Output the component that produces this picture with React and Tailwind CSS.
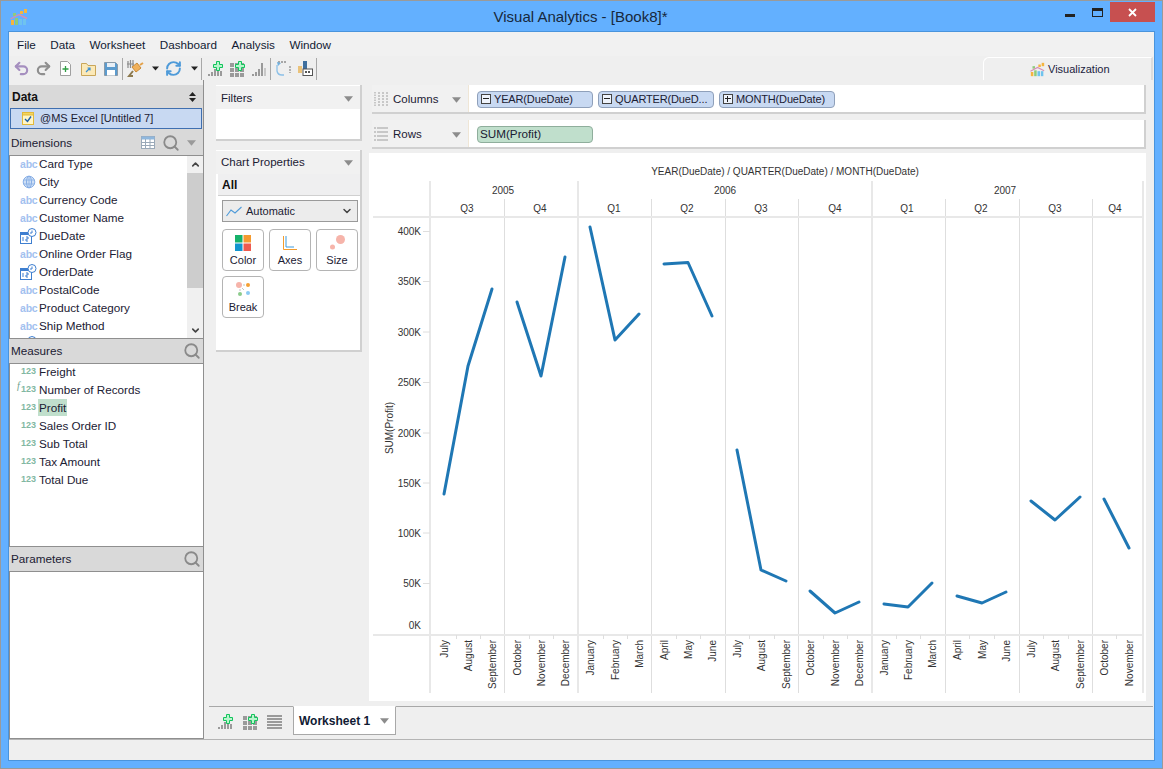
import { Search, Undo2, Redo2, ChevronDown, ChevronUp, RefreshCw } from 'lucide-react';

const dimensions = [
  ['abc', 'Card Type'],
  ['geo', 'City'],
  ['abc', 'Currency Code'],
  ['abc', 'Customer Name'],
  ['date', 'DueDate'],
  ['abc', 'Online Order Flag'],
  ['date', 'OrderDate'],
  ['abc', 'PostalCode'],
  ['abc', 'Product Category'],
  ['abc', 'Ship Method'],
  ['date', ''],
];

const measures = ['Freight', 'Number of Records', 'Profit', 'Sales Order ID', 'Sub Total', 'Tax Amount', 'Total Due'];

const segments = [
  [[444, 494, 'July'], [468, 366, 'August'], [492, 289, 'September']],
  [[517, 302, 'October'], [541, 376, 'November'], [565, 257, 'December']],
  [[590, 227, 'January'], [615, 340, 'February'], [639, 314, 'March']],
  [[664, 264, 'April'], [688, 262.5, 'May'], [712, 316, 'June']],
  [[737, 450, 'July'], [761, 570, 'August'], [786, 581, 'September']],
  [[810, 591, 'October'], [835, 613, 'November'], [859, 602, 'December']],
  [[884, 604, 'January'], [908, 607, 'February'], [932, 583, 'March']],
  [[957, 596, 'April'], [982, 603, 'May'], [1006, 592, 'June']],
  [[1031, 501, 'July'], [1055, 520, 'August'], [1080, 497, 'September']],
  [[1104, 499, 'October'], [1129, 548, 'November']],
];

const yTicks = [
  ['400K', 231.5], ['350K', 281.5], ['300K', 332], ['250K', 382.5], ['200K', 433],
  ['150K', 483], ['100K', 533], ['50K', 583.5],
];

const quarters = [['Q3', 467], ['Q4', 540], ['Q1', 614], ['Q2', 687], ['Q3', 761], ['Q4', 835], ['Q1', 907], ['Q2', 981], ['Q3', 1055], ['Q4', 1115]];
const monthTicks = [456, 480, 529, 553, 603, 627, 676, 700, 749, 774, 823, 847, 896, 920, 969, 994, 1043, 1068, 1116];

function Caret({ className = 'text-[#8c8c8c]', size = 9 }) {
  return (
    <svg width={size} height={Math.ceil(size * 0.6)} viewBox="0 0 10 6" className={className}>
      <polygon points="0,0 10,0 5,6" fill="currentColor" />
    </svg>
  );
}

function AppLogo({ size = 18 }) {
  return (
    <svg width={size} height={size} viewBox="0 0 18 18">
      <rect x="1" y="12" width="3" height="5" fill="#f5b53f" />
      <rect x="5" y="10" width="3" height="7" fill="#8ecb7c" />
      <rect x="9" y="11" width="3" height="6" fill="#6fc3ee" />
      <rect x="13" y="11" width="3" height="6" fill="#6fc3ee" />
      <rect x="3" y="5" width="3" height="3" fill="#8ecb7c" />
      <rect x="10" y="3" width="3" height="3" fill="#f5b53f" />
      <rect x="14" y="1" width="3" height="4" fill="#f5b53f" />
      <polyline points="0.5,11 9,6.5 17,10.5" fill="none" stroke="#d58fb4" strokeWidth="1.4" />
    </svg>
  );
}

function PlusMark() {
  return <path d="M9.500 .5h3v3h3v3h-3v3h-3v-3h-3v-3h3z" fill="#b8f5cd" stroke="#12c45c" strokeWidth="1" />;
}

function BarsPlus({ plus = true, color = '#9a9a9a' }) {
  return (
    <svg width="16" height="16" viewBox="0 0 16 16">
      <rect x="1" y="13" width="2" height="2" fill={color} />
      <rect x="4" y="11" width="2" height="4" fill={color} />
      <rect x="7" y="8" width="2" height="7" fill={color} />
      <rect x="10" y={plus ? 10 : 2} width="2" height={plus ? 5 : 13} fill={color} />
      <rect x="13" y={plus ? 10 : 7} width="2" height={plus ? 5 : 8} fill={plus ? color : '#c8c8c8'} />
      {plus && <PlusMark />}
    </svg>
  );
}

function GridPlus() {
  return (
    <svg width="16" height="16" viewBox="0 0 16 16">
      {[1, 6, 11].map((x) => [2, 7, 12].map((y) => <rect key={`${x}-${y}`} x={x} y={y} width="4" height="4" fill="#9a9a9a" />))}
      <PlusMark />
    </svg>
  );
}

function Toolbar() {
  return (
    <div className="flex items-center h-[24px] pl-[4px] pt-[1px]">
      <Undo2 size={17} strokeWidth={3} className="text-[#a58fbf]" />
      <Redo2 size={17} strokeWidth={3} className="text-[#8f8f8f] ml-[5px]" />
      <svg width="13" height="15" viewBox="0 0 13 15" className="ml-[7px]">
        <path d="M1.5.5h7l3 3v11h-10z" fill="#fff" stroke="#a0a0a0" />
        <path d="M6.5 5v6M3.5 8h6" stroke="#2f9e44" strokeWidth="1.3" />
      </svg>
      <svg width="15" height="14" viewBox="0 0 15 14" className="ml-[9px]">
        <path d="M.5 1.5h5l1.5 2h7.500v10H.5z" fill="#fbe9b8" stroke="#c9a659" />
        <path d="M5 10l4-4M6.500 6H9v2.500" fill="none" stroke="#3b8fd4" strokeWidth="1.2" />
      </svg>
      <svg width="14" height="14" viewBox="0 0 14 14" className="ml-[8px]">
        <path d="M.5.5h11l2 2v11H.5z" fill="#5b9bce" stroke="#8a9aa8" />
        <rect x="3" y="1" width="8" height="4" fill="#e8eff6" />
        <rect x="3" y="8" width="8" height="5.500" fill="#fff" />
      </svg>
      <div className="w-px h-[22px] bg-[#a8a8a8] ml-[4px]" />
      <svg width="17" height="18" viewBox="0 0 17 18" className="ml-[4px]">
        <path d="M5 7l5-4 4 5-5 4z" fill="#f0b05a" stroke="#c98a35" />
        <path d="M13 5l3-2" stroke="#e4a24a" strokeWidth="2" />
        <path d="M1 1v7M3.500 0v8M6 0v6M0 4h7" stroke="#8a8a8a" strokeWidth="1.200" />
        <path d="M6 11l-4 5h4" fill="none" stroke="#8d7a4f" strokeWidth="2" />
      </svg>
      <Caret className="text-[#222] ml-[8px]" size={7} />
      <RefreshCw size={17} strokeWidth={2.8} className="text-[#4f9bd9] ml-[6px]" />
      <Caret className="text-[#222] ml-[9px]" size={7} />
      <div className="w-px h-[22px] bg-[#a8a8a8] ml-[3px]" />
      <span className="ml-[5px] flex"><BarsPlus /></span>
      <span className="ml-[6px] flex"><GridPlus /></span>
      <span className="ml-[6px] flex"><BarsPlus plus={false} /></span>
      <div className="w-px h-[22px] bg-[#a8a8a8] ml-[3px]" />
      <svg width="15" height="15" viewBox="0 0 15 15" className="ml-[5px]">
        <path d="M1 4v6a5 5 0 0 0 5 4h2" fill="none" stroke="#8cc0e8" strokeWidth="1.300" />
        <path d="M2 1h9M14 5v7" stroke="#8f8f8f" strokeWidth="1.300" strokeDasharray="2 1" />
        <path d="M1 1l4 1-3 3z" fill="#6fb0e0" />
      </svg>
      <svg width="15" height="15" viewBox="0 0 15 15" className="ml-[7px]">
        <rect x="0" y="5" width="4" height="7" fill="#eac27a" />
        <rect x="5" y="0" width="4" height="9" fill="#3f6f9e" />
        <rect x="5" y="8" width="9.500" height="6.500" fill="#fff" stroke="#555" />
        <rect x="7" y="10" width="2" height="2" fill="#555" />
        <rect x="10" y="10" width="2" height="2" fill="#555" />
      </svg>
      <div className="w-px h-[22px] bg-[#a8a8a8] ml-[3px]" />
      <div className="ml-auto mr-[1px] self-end h-[23px] w-[170px] bg-[#efefef] rounded-tl-[6px] border-t border-l border-white border-r-2 border-r-[#dcdcdc] flex items-center pl-[46px] gap-[3px]">
        <AppLogo size={15} />
        <span className="text-[11px] text-[#1c2340]">Visualization</span>
      </div>
    </div>
  );
}

function FieldIcon({ kind }) {
  if (kind === 'abc') {
    return <span className="w-[17px] shrink-0 text-left text-[10.5px] leading-none font-bold text-[#a3c1ef] tracking-[-0.2px]">abc</span>;
  }
  if (kind === 'geo') {
    return (
      <svg width="14" height="14" viewBox="0 0 14 14" className="ml-[2px] mr-[1px] shrink-0">
        <circle cx="7" cy="7" r="5.800" fill="#cfe0f6" stroke="#86aee6" />
        <ellipse cx="7" cy="7" rx="2.500" ry="5.800" fill="none" stroke="#86aee6" />
        <path d="M1.500 5h11M1.500 9h11M7 1v12" stroke="#86aee6" strokeWidth="0.800" />
      </svg>
    );
  }
  return (
    <svg width="17" height="16" viewBox="0 0 17 16" className="shrink-0">
      <rect x="0.500" y="4.500" width="11" height="11" fill="#fff" stroke="#3f7fd0" />
      <rect x="0.500" y="4.500" width="11" height="2.500" fill="#3f7fd0" />
      <path d="M3 9v4M6 9h2v2H6v2h2" fill="none" stroke="#3f7fd0" />
      <circle cx="12" cy="4.500" r="4" fill="#fff" stroke="#3f7fd0" />
      <path d="M12 2.500v2.500h-2" fill="none" stroke="#3f7fd0" />
    </svg>
  );
}

function PaneHeader({ title, extra, className = 'h-[24px]' }) {
  return (
    <div className={`flex items-center justify-between shrink-0 bg-[#d9d9d9] pl-[2px] pr-[2px] ${className}`}>
      <span className="text-[11.7px] text-[#1b2033]">{title}</span>
      {extra || <Search size={18} strokeWidth={2.4} className="text-[#8a8a8a]" />}
    </div>
  );
}

function LeftPane() {
  return (
    <div className="w-[195px] pt-[5px] flex flex-col border-r border-[#8f8f8f] h-[659px]">
      <div className="h-[23px] bg-[#d9d9d9] flex items-center justify-between pl-[3px] pr-[7px]">
        <span className="text-[12px] font-bold text-[#111]">Data</span>
        <svg width="7" height="10" viewBox="0 0 7 10" className="text-[#222]">
          <path d="M3.500 0L7 4H0zM3.500 10L0 6h7z" fill="currentColor" />
        </svg>
      </div>
      <div className="h-[22px] bg-[#d9d9d9] pl-[1px] pr-[1px] pb-[1px]">
        <div className="h-full bg-[#c8d9f2] border border-[#3f6fb0] flex items-center pl-[11px] gap-[6px]">
          <svg width="12" height="13" viewBox="0 0 12 13">
            <rect x="0.500" y="1.500" width="11" height="11" fill="#fff6c8" stroke="#e2b93a" />
            <rect x="0.500" y="0.500" width="11" height="2.500" fill="#f3d561" stroke="#e2b93a" />
            <path d="M3 7l2.500 2.500L9 4.500" fill="none" stroke="#1d5fa8" strokeWidth="1.400" />
          </svg>
          <span className="text-[11px] text-[#1b2033]">@MS Excel [Untitled 7]</span>
        </div>
      </div>
      <PaneHeader
        title="Dimensions"
        className="h-[25px]"
        extra={
          <div className="flex items-center pr-[5px]">
            <svg width="14" height="13" viewBox="0 0 14 13" className="mr-[7px]">
              <rect x="0.500" y="0.500" width="13" height="12" fill="#fff" stroke="#9aa9b8" />
              <rect x="0.500" y="0.500" width="13" height="3" fill="#8fb7dd" />
              <path d="M0 6.500h14M0 9.500h14M4.500 3v10M9 3v10" stroke="#9aa9b8" />
            </svg>
            <Search size={18} strokeWidth={2.4} className="text-[#8a8a8a]" />
            <Caret className="text-[#9a9a9a] ml-[7px]" />
          </div>
        }
      />
      <div className="h-[184px] shrink-0 flex overflow-hidden bg-white border-y border-[#8f8f8f] border-l">
        <div className="flex-1 overflow-hidden -mt-px">
          {dimensions.map(([kind, name], i) => (
            <div key={i} className="h-[18px] shrink-0 flex items-center pl-[10px] gap-[2px]">
              <FieldIcon kind={kind} />
              <span className="text-[11.7px] text-[#1b2033]">{name}</span>
            </div>
          ))}
        </div>
        <div className="w-[16px] bg-[#f0f0f0] flex flex-col">
          <div className="h-[17px] flex items-center justify-center"><ChevronUp size={11} strokeWidth={3.5} className="text-[#444]" /></div>
          <div className="h-[115px] bg-[#cdcdcd]" />
          <div className="flex-1 flex items-end justify-center pb-[2px]"><ChevronDown size={11} strokeWidth={3.5} className="text-[#444]" /></div>
        </div>
      </div>
      <PaneHeader title="Measures" />
      <div className="h-[184px] shrink-0 bg-white border-y border-l border-[#8f8f8f]">
        <div className="-mt-[2px]">
          {measures.map((name) => (
            <div key={name} className="h-[18px] flex items-center relative">
              {name === 'Number of Records' && (
                <span className="absolute left-[7px] -top-[2px] text-[10px] italic font-['Liberation_Serif',serif] text-[#6f9f8c]">f</span>
              )}
              <span className="ml-[11px] w-[15px] text-[9px] leading-none font-bold text-[#82b8a2]">123</span>
              <span className={`text-[11.7px] text-[#1b2033] ml-[2px] px-[1px] leading-[17px] ${name === 'Profit' ? 'bg-[#c0dfcc]' : ''}`}>{name}</span>
            </div>
          ))}
        </div>
      </div>
      <PaneHeader title="Parameters" />
      <div className="flex-1 bg-white border-t border-l border-b border-[#8f8f8f]" />
    </div>
  );
}

function PanelHeader({ title, className = 'h-[23px]' }) {
  return (
    <div className={`bg-[#f1f1f1] flex items-center justify-between pl-[5px] pr-[7px] border-t border-white ${className}`}>
      <span className="text-[11.5px] text-[#1b2033]">{title}</span>
      <Caret />
    </div>
  );
}

function PropButton({ label, children }) {
  return (
    <div className="w-[42px] h-[42px] bg-white border border-[#b4b4b4] rounded-[4px] flex flex-col items-center pt-[3px]">
      <div className="h-[19px] flex items-center">{children}</div>
      <span className="text-[11px] leading-[14px] mt-[1px] text-[#1b2033]">{label}</span>
    </div>
  );
}

function CenterPane() {
  return (
    <div className="w-[146px] ml-[12px] pt-[5px] flex flex-col gap-[9px]">
      <div className="h-[56px] bg-white border-r-2 border-b-2 border-[#d0d0d0]">
        <PanelHeader title="Filters" className="h-[24px] pt-[2px]" />
      </div>
      <div className="h-[202px] bg-white border-r-2 border-b-2 border-[#d0d0d0]">
        <PanelHeader title="Chart Properties" className="h-[24px] pt-[1px]" />
        <div className="h-[22px] bg-[#efeff0] border-b border-[#d0d0d0] pl-[4px] ml-[2px] flex items-center text-[12px] font-bold text-[#111]">All</div>
        <div className="ml-[6px] mt-[4px] w-[136px] h-[22px] border border-[#9a9a9a] bg-[#ececec] flex items-center pl-[3px] pr-[4px]">
          <svg width="16" height="11" viewBox="0 0 16 11">
            <polyline points="0.500,10 5,4 9,7 15.500,1" fill="none" stroke="#4f9bd9" strokeWidth="1.100" />
          </svg>
          <span className="text-[11px] ml-[4px] text-[#1b2033]">Automatic</span>
          <ChevronDown size={12} strokeWidth={3} className="ml-auto text-[#444]" />
        </div>
        <div className="ml-[6px] mt-[7px] w-[136px] grid grid-cols-[42px_42px_42px] gap-x-[5px] gap-y-[5px]">
          <PropButton label="Color">
            <svg width="16" height="16" viewBox="0 0 16 16">
              <rect width="7.500" height="7.500" fill="#16b26a" />
              <rect x="8.500" width="7.500" height="7.500" fill="#f59a2f" />
              <rect y="8.500" width="7.500" height="7.500" fill="#1295cf" />
              <rect x="8.500" y="8.500" width="7.500" height="7.500" fill="#ee5b4f" />
            </svg>
          </PropButton>
          <PropButton label="Axes">
            <svg width="14" height="14" viewBox="0 0 14 14">
              <path d="M.5 0v13.500H14" fill="none" stroke="#f39c2d" />
              <path d="M3 0v11h8" fill="none" stroke="#3e9bdc" />
            </svg>
          </PropButton>
          <PropButton label="Size">
            <svg width="15" height="15" viewBox="0 0 15 15">
              <circle cx="10.500" cy="4.500" r="4.500" fill="#f6b4aa" />
              <circle cx="2.500" cy="12" r="2.500" fill="#f6b4aa" />
            </svg>
          </PropButton>
          <PropButton label="Break">
            <svg width="15" height="15" viewBox="0 0 15 15">
              <circle cx="3" cy="3" r="3" fill="#f6b4aa" />
              <circle cx="12" cy="3" r="2" fill="#f5a033" />
              <circle cx="4" cy="12" r="2" fill="#8ccb8c" />
              <circle cx="12" cy="11" r="2" fill="#8ccaf3" />
              <path d="M7 3h2M6 6l2 2M4 7v2" stroke="#aaa" strokeWidth="0.700" />
            </svg>
          </PropButton>
        </div>
      </div>
    </div>
  );
}

function Pill({ label, sign, className = 'w-[116px] bg-[#c8d9f2] border-[#8fa0ba]' }) {
  return (
    <div className={`h-[17px] rounded-[4px] border flex items-center overflow-hidden ${className}`}>
      {sign && (
        <span className="w-[10px] h-[10px] ml-[3px] mr-[3px] border border-[#444] bg-[#eef3fb] relative shrink-0">
          <span className="absolute left-[1px] right-[1px] top-[3px] h-px bg-[#222]" />
          {sign === '+' && <span className="absolute top-[1px] bottom-[1px] left-[3px] w-px bg-[#222]" />}
        </span>
      )}
      <span className={`whitespace-nowrap text-[#1b2033] ${sign ? 'text-[11px] tracking-[-0.15px]' : 'text-[11.7px] ml-[2px]'}`}>{label}</span>
    </div>
  );
}

function Shelf({ label, icon, children }) {
  return (
    <div className="ml-[3px] h-[29px] flex border-b-2 border-r-2 border-[#d0d0d0] bg-white">
      <div className="w-[97px] bg-[#f1f1f1] border-r border-[#efe6d6] flex items-center pl-[2px] pr-[7px] pt-[2px]">
        {icon}
        <span className="text-[11.5px] text-[#1b2033] ml-[5px]">{label}</span>
        <Caret className="text-[#8c8c8c] ml-auto" />
      </div>
      <div className="flex items-center gap-[5px] pl-[8px] pt-[1px]">{children}</div>
    </div>
  );
}

function ChartSvg() {
  return (
    <svg width="777" height="548" viewBox="369 153 777 548" className="block" fontSize="10" fill="#333" fontFamily="'Liberation Sans', sans-serif">
      <text x="785" y="175" textAnchor="middle">YEAR(DueDate) / QUARTER(DueDate) / MONTH(DueDate)</text>
      <text x="503" y="194" textAnchor="middle">2005</text>
      <text x="725" y="194" textAnchor="middle">2006</text>
      <text x="1005" y="194" textAnchor="middle">2007</text>
      {quarters.map(([q, x]) => <text key={x} x={x} y="212" textAnchor="middle">{q}</text>)}

      {[430, 578, 872, 1143].map((x) => <line key={x} x1={x} x2={x} y1="181" y2="693" stroke="#e8e8e8" strokeWidth="2" />)}
      {[504.5, 651.5, 725.5, 798.5, 945.5, 1019.5, 1092.5].map((x) => <line key={x} x1={x} x2={x} y1="199" y2="693" stroke="#dedede" />)}
      <line x1="373" x2="1143" y1="217" y2="217" stroke="#e8e8e8" strokeWidth="2" />
      <line x1="373" x2="1143" y1="635" y2="635" stroke="#e8e8e8" strokeWidth="2" />
      {monthTicks.map((x) => <line key={x} x1={x + 0.5} x2={x + 0.5} y1="635" y2="639" stroke="#dedede" />)}

      {yTicks.map(([label, y]) => (
        <g key={label}>
          <text x="421" y={y + 3.5} textAnchor="end">{label}</text>
          <line x1="423" x2="430" y1={y} y2={y} stroke="#dedede" />
        </g>
      ))}
      <text x="421" y="629" textAnchor="end">0K</text>
      <text transform="translate(393 428) rotate(-90)" textAnchor="middle">SUM(Profit)</text>

      {segments.map((seg) => (
        <polyline
          key={seg[0][0]}
          points={seg.map(([x, y]) => `${x},${y}`).join(' ')}
          fill="none"
          stroke="#1f77b4"
          strokeWidth="3"
          strokeLinecap="round"
          strokeLinejoin="round"
        />
      ))}
      {segments.flat().map(([x, , month]) => (
        <text key={x} transform={`translate(${x + 3.5} 640) rotate(-90)`} textAnchor="end">{month}</text>
      ))}
    </svg>
  );
}

function RightPane() {
  return (
    <div className="w-[777px] ml-[7px] pt-[5px] flex flex-col gap-[6px]">
      <Shelf
        label="Columns"
        icon={
          <svg width="14" height="15" viewBox="0 0 14 15">
            {[0, 4, 8, 12].map((x) => <path key={x} d={`M${x + 1} 0v15`} stroke="#c8c8c8" strokeWidth="2" strokeDasharray={x === 0 ? '1.500 1' : '2 1'} />)}
          </svg>
        }
      >
        <Pill label="YEAR(DueDate)" sign="-" />
        <Pill label="QUARTER(DueD..." sign="-" />
        <Pill label="MONTH(DueDate)" sign="+" />
      </Shelf>
      <Shelf
        label="Rows"
        icon={
          <svg width="14" height="15" viewBox="0 0 14 15">
            {[1, 5, 9, 13].map((y) => <path key={y} d={`M0 ${y}h2M3 ${y}h11`} stroke="#c8c8c8" strokeWidth="2" />)}
          </svg>
        }
      >
        <Pill label="SUM(Profit)" className="w-[116px] bg-[#c0dfcc] border-[#8fae9c]" />
      </Shelf>
      <div className="h-[548px] bg-white -mt-[2px]">
        <ChartSvg />
      </div>
    </div>
  );
}

function SheetBar() {
  return (
    <div className="h-[33px] border-t border-[#a8a8a8] ml-[5px] mr-[1px] flex items-start">
      <div className="flex items-center gap-[9px] pl-[8px] mt-[7px]">
        <BarsPlus />
        <GridPlus />
        <svg width="16" height="14" viewBox="0 0 16 14">
          {[1, 4, 7, 10, 13].map((y) => <rect key={y} y={y - 1} width="15" height="2" fill="#9a9a9a" />)}
        </svg>
      </div>
      <div className="ml-[10px] w-[103px] h-[29px] -mt-px bg-white border border-[#a8a8a8] border-t-white flex items-center pl-[5px] pr-[6px] justify-between">
        <span className="text-[12px] font-bold text-[#111a33]">Worksheet 1</span>
        <Caret />
      </div>
    </div>
  );
}

export default function App() {
  return (
    <div className="w-[1163px] h-[769px] flex flex-col bg-[#63b0ff] border border-[#9a9a9a] px-[7px] pb-[7px] overflow-hidden font-['Liberation_Sans',sans-serif]">
      <div className="h-[30px] shrink-0 grid grid-cols-[1fr_auto_1fr] -mx-[7px]">
        <div className="pl-[9px] pt-[7px]"><AppLogo /></div>
        <div className="text-[15px] text-[#17283c] pt-[5px] -ml-[2px]">Visual Analytics - [Book8]*</div>
        <div className="flex justify-end items-start pr-[7px]">
          <div className="w-[10px] h-[3px] bg-[#222] mt-[13px] mr-[17px]" />
          <div className="w-[11px] h-[9px] border border-[#222] border-t-[3px] mt-[7px] mr-[7px]" />
          <div className="w-[45px] h-[20px] bg-[#c75050] mt-[1px] flex items-center justify-center">
            <svg width="9" height="9" viewBox="0 0 9 9">
              <path d="M1 1l7 7M8 1L1 8" stroke="#fff" strokeWidth="1.800" />
            </svg>
          </div>
        </div>
      </div>
      <div className="flex-1 min-h-0 flex flex-col bg-[#efefef] border border-[#4a94dc]">
        <div className="h-[24px] bg-[#f1f1f1] shrink-0 flex items-center gap-[14.5px] pl-[8px] pt-[2px] text-[11.7px] text-[#111a33]">
          <span>File</span>
          <span>Data</span>
          <span>Worksheet</span>
          <span>Dashboard</span>
          <span>Analysis</span>
          <span>Window</span>
        </div>
        <Toolbar />
        <div className="flex-1 min-h-0 flex">
          <LeftPane />
          <div className="flex-1 min-w-0 flex flex-col">
            <div className="h-[626px] flex">
              <CenterPane />
              <RightPane />
            </div>
            <SheetBar />
          </div>
        </div>
        <div className="h-[21px] shrink-0 border-t border-[#b4b4b4]" />
      </div>
    </div>
  );
}
